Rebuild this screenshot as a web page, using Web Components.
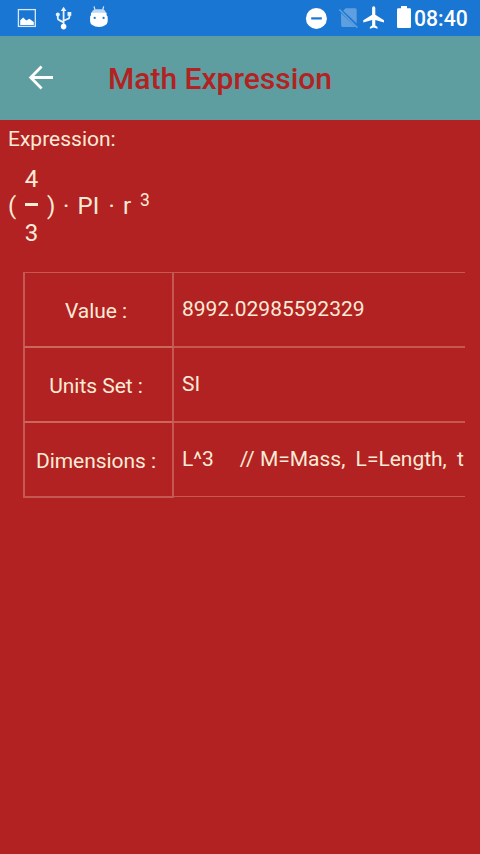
<!DOCTYPE html>
<html lang="en">
<head>
<meta charset="utf-8">
<title>Math Expression</title>
<style>
html,body{margin:0;padding:0;background:#b22222}
body{font-family:Roboto,"Liberation Sans",sans-serif;color:#faebd7;width:480px;height:854px;overflow:hidden}
</style>
</head>
<body>
<math-screen></math-screen>
<script>
const define=(name,html)=>{
  const t=document.createElement('template');
  t.innerHTML=html;
  customElements.define(name,class extends HTMLElement{
    constructor(){super();this.attachShadow({mode:'open'}).append(t.content.cloneNode(true));}
  });
};

define('status-bar',`<style>
:host{display:flex;height:36px;background:#1976d2;color:#fff;align-items:flex-start;box-sizing:border-box}
svg{display:block;flex:none}
.time{flex:none;font-size:21.2px;font-weight:500;line-height:36px;margin-left:3px;padding-top:1px;white-space:nowrap}
</style>
<svg width="120" height="36" viewBox="0 0 120 36">
<rect x="18.4" y="9.6" width="16.9" height="16.8" fill="none" stroke="#d9e8f8" stroke-width="1.3"/>
<path d="M20.2 24.9V20.2L23.2 17.6L26.3 20.4L29.3 18.7L33.8 22V24.9Z" fill="#fff"/>
<g fill="none" stroke="#e8f2fb" stroke-width="1.8"><path d="M63.6 9V25M57.8 15.5V18.2Q57.8 19.6 59.3 20.1L63.6 22.4M69.4 14.5V16.9Q69.4 18.3 68 18.8L63.6 20.8"/></g>
<path d="M60.8 11L63.6 6.8L66.4 11Z" fill="#e8f2fb"/>
<circle cx="57.8" cy="14.6" r="2" fill="#e8f2fb"/><rect x="67.5" y="12" width="3.8" height="3.8" fill="#e8f2fb"/><circle cx="63.6" cy="26.6" r="2.8" fill="#fff"/>
<path d="M94 6.3L95 10M103.7 6.3L102.7 10" stroke="#d5e6f7" stroke-width="1.2"/>
<path d="M91.4 14Q92 9.2 96 9.2H102Q105.6 9.2 106.2 14Z" fill="#bcd8f3"/>
<path d="M91 12.7H106.6V15.3Q107.9 16 107.7 18V21.5Q107.4 23.8 105.5 25Q103 27 99 27T92.3 25Q90.3 23.8 90.1 21.5V18Q89.8 16 91 15.3Z" fill="#fff"/>
<circle cx="94.7" cy="17.9" r="1.1" fill="#1976d2"/><circle cx="103.6" cy="17.9" r="1.1" fill="#1976d2"/>
</svg>
<svg width="291" height="36" viewBox="120 0 291 36">
<circle cx="316.4" cy="18.4" r="10.5" fill="#fff"/><rect x="311.2" y="17.3" width="10.6" height="2.2" fill="#1976d2"/>
<path d="M345.6 8.2H355.2Q356.7 8.2 356.7 9.7V23.5L343.2 10.7Z" fill="#609fdf"/>
<path d="M340.9 12.9L355.6 27H342.7Q341.2 27 341.2 25.5Z" fill="#609fdf"/>
<path d="M339.3 9.5L357.3 27.6" stroke="#609fdf" stroke-width="1.5"/>
<path d="M384 22.5V20.3L375.3 14.8V8Q375.3 6.3 373.7 6.3T372.1 8V14.8L363.3 20.3V22.5L372.1 19.9V25.5L369.9 27V28.7L373.7 27.6L377.5 28.7V27L375.3 25.5V19.9Z" fill="#fff"/>
<path d="M401 6H407V8.3H409.8Q411 8.3 411 9.5V26.8Q411 28 409.8 28H398.2Q397 28 397 26.8V9.5Q397 8.3 398.2 8.3H401Z" fill="#fff"/>
</svg>
<div class="time">08:40</div>`);

define('tool-bar',`<style>
:host{display:flex;height:84px;background:#5f9ea0;align-items:center}
svg{flex:none;display:block;margin-left:24px}
h1{margin:0 0 0 48px;padding-top:1px;font-size:30px;line-height:36px;font-weight:500;color:#b22222;white-space:nowrap}
</style>
<svg width="36" height="36" viewBox="0 0 36 36"><path d="M29 17.5H7M17.6 6.6L6.7 17.5L17.6 28.4" fill="none" stroke="#fff" stroke-width="2.8"/></svg>
<h1><slot></slot></h1>`);

define('frac-tion',`<style>
:host{display:flex;flex-direction:column;align-items:center;width:14px;flex:none}
.n,.d{line-height:28px}
i{display:block;width:13px;height:3px;background:#faebd7;margin:10px 0 13px}
</style>
<span class="n"><slot name="num"></slot></span><i></i><span class="d"><slot name="den"></slot></span>`);

define('math-formula',`<style>
:host{display:flex;align-items:center;height:82px;font-size:24px;line-height:28px;white-space:pre}
span{flex:none}
.l{width:16.5px}.dot{width:14.5px}
.r{margin-left:8.5px;width:16px}
.pi{width:31px}.v{width:17px}
sup{font-size:17.5px;line-height:20px;margin-top:-12px;vertical-align:baseline}
</style>
<span class="l">(</span><frac-tion><b slot="num" style="font-weight:400">4</b><b slot="den" style="font-weight:400">3</b></frac-tion><span class="r">)</span><span class="dot">·</span><span class="pi">PI</span><span class="dot">·</span><span class="v">r</span><sup>3</sup>`);

define('data-row',`<style>
:host{display:grid;grid-template-columns:151px 291px;height:75px;--line:#c65852}
.k,.v{box-sizing:border-box;font-size:21px;line-height:25px;white-space:pre;display:flex;align-items:center;border-bottom:2px solid var(--line)}
.k{border-left:2px solid var(--line);border-right:2px solid var(--line);justify-content:center;padding:3px 5px 0 0;letter-spacing:-.04px}
:host(:not([last])) .k{border-bottom-color:#cb675d}
.v{padding-left:8px;overflow:hidden;padding-bottom:1px}
:host([first]){height:76px}
:host([first]) .k,:host([first]) .v{border-top:1px solid var(--line)}
:host([last]) .v{height:74px;border-bottom-width:1px;padding-bottom:1px;letter-spacing:-.02px}
</style>
<div class="k"><slot name="key"></slot></div><div class="v"><slot></slot></div>`);

define('data-table',`<style>:host{display:block;margin:25px 0 0 23px;width:442px}</style><slot></slot>`);

define('math-screen',`<style>
:host{display:block;width:480px;height:854px;background:#b22222;overflow:hidden}
.label{padding:7px 8px 0;font-size:21px;line-height:25px}
math-formula{margin:13px 8px 0}
</style>
<status-bar></status-bar>
<tool-bar>Math Expression</tool-bar>
<div class="label">Expression:</div>
<math-formula></math-formula>
<data-table>
<data-row first><span slot="key">Value :</span><span>8992.02985592329</span></data-row>
<data-row><span slot="key">Units Set :</span><span>SI</span></data-row>
<data-row last><span slot="key">Dimensions :</span><span>L^3     // M=Mass,  L=Length,  t</span></data-row>
</data-table>`);
</script>
</body>
</html>
